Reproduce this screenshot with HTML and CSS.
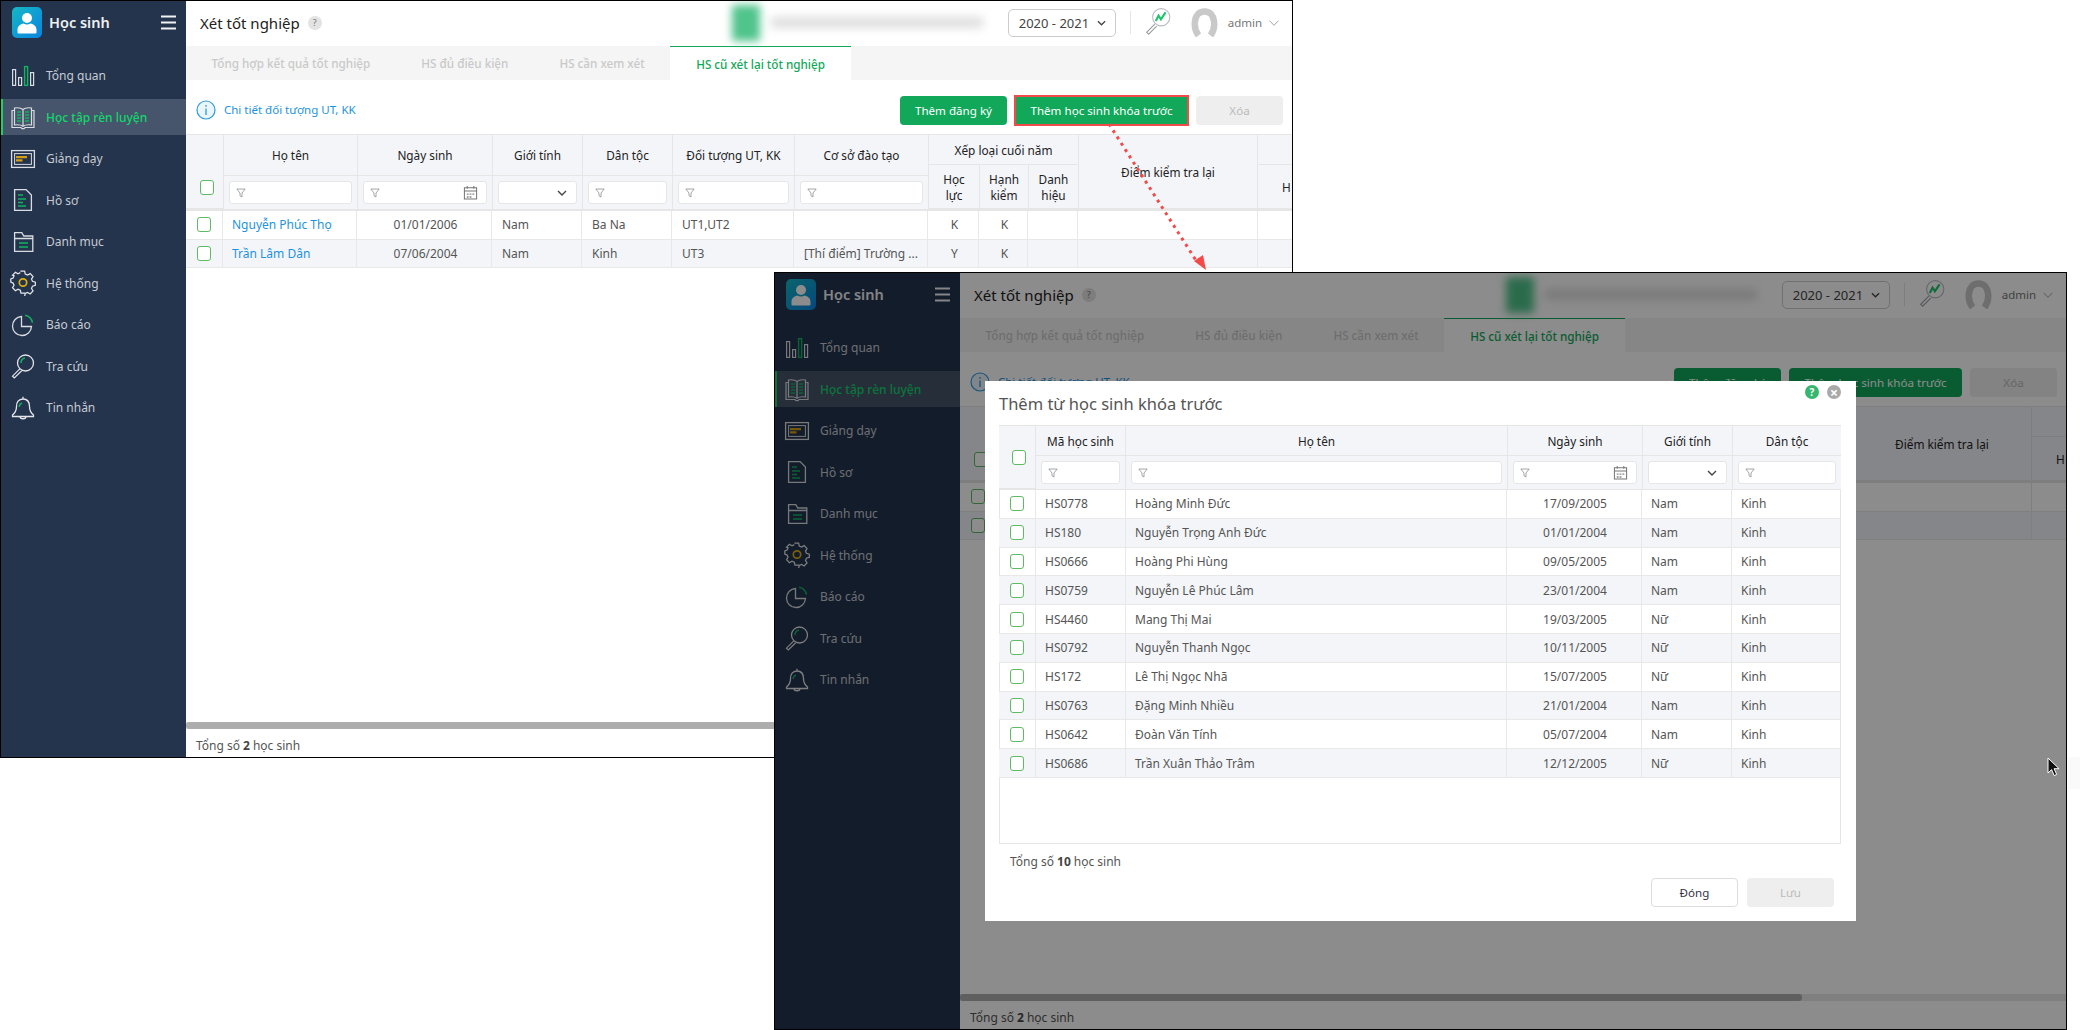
FILE: index.html
```html
<!DOCTYPE html>
<html lang="vi">
<head>
<meta charset="utf-8">
<title>Xét tốt nghiệp</title>
<link rel="stylesheet" href="styles.css">
</head>
<body>
<svg class="defs" width="0" height="0" aria-hidden="true">
  <symbol id="i-user" viewBox="0 0 30 30"><circle cx="15" cy="10.500" r="5" fill="#fff"/><path d="M5.500 25v-2.500c0-4 3-6 6-6.500 2 1.400 5 1.400 7 0 3 .5 6 2.500 6 6.500V25a1 1 0 0 1-1 1h-17a1 1 0 0 1-1-1z" fill="#fff"/></symbol>
  <symbol id="i-bars" viewBox="0 0 26 26"><g fill="none" stroke="#d9dce1" stroke-width="1.200"><rect x="2.600" y="6.600" width="3" height="15.800"/><rect x="8.600" y="14.600" width="3" height="7.800"/><rect x="20.600" y="9.600" width="3" height="12.800"/></g><rect x="14.600" y="3.600" width="3" height="18.800" fill="none" stroke="#12b262" stroke-width="1.400"/></symbol>
  <symbol id="i-book" viewBox="0 0 26 26"><g fill="none" stroke="#d9dce1" stroke-width="1.200"><path d="M13 5.500C11 3.800 7.500 3.500 4.500 4v17c3-.5 6.500-.2 8.500 1.300 2-1.500 5.500-1.800 8.500-1.300V4c-3-.5-6.500-.2-8.500 1.500zM13 5.500v16.800"/><path d="M4.500 6.500H2v17h9l1 1.200h2l1-1.200h9v-17h-2.500"/></g><g stroke="#12b262" stroke-width="1.600"><path d="M7 8h4M7 11h4M7 14h4M7 17h4M15 8h4M15 11h4M15 14h4M15 17h4"/></g></symbol>
  <symbol id="i-screen" viewBox="0 0 26 26"><rect x="1.600" y="4.600" width="22.800" height="16.800" fill="none" stroke="#d9dce1" stroke-width="1.300"/><rect x="4.600" y="7.600" width="16.800" height="10.800" fill="none" stroke="#d9dce1" stroke-width="1"/><path d="M6 10h11v2.200H6zM6 13.200h6.500v2.200H6z" fill="#d39e16"/></symbol>
  <symbol id="i-doc" viewBox="0 0 26 26"><path d="M4.600 2.600h11.500l5.300 5.500v15.300H4.600z" fill="none" stroke="#d9dce1" stroke-width="1.300"/><path d="M8 8h5M8 12h8M8 15.500h5M8 19h8" stroke="#12b262" stroke-width="1.700"/></symbol>
  <symbol id="i-folder" viewBox="0 0 26 26"><path d="M4.600 3.600h7.200l2 3.400h9v15.400H4.600zM4.600 9.500h18.200" fill="none" stroke="#d9dce1" stroke-width="1.300"/><path d="M9 14h9M9 18h9" stroke="#12b262" stroke-width="1.700"/></symbol>
  <symbol id="i-gear" viewBox="0 0 26 26"><path d="M10.800 2.500h4.400l.7 3 2.400 1.100 2.700-1.600 3 3.100-1.600 2.600 1 2.300 3 .9v3.400l-3 .9-1 2.300 1.600 2.600-3 3.100-2.700-1.600-2.400 1.100-.7 3" transform="translate(0 -1.200) scale(.96)" fill="none" stroke="#e3e5e9" stroke-width="1.300"/><path d="M15.200 24.300h-4.400l-.7-3-2.400-1.100-2.700 1.600-3-3.100 1.600-2.600-1-2.300-2.400-.9v-3.400l2.400-.9 1-2.300L2 5.600l3-3.100 2.700 1.600 2.400-1.100" transform="translate(.6 -.2) scale(.96)" fill="none" stroke="#e3e5e9" stroke-width="1.300"/><circle cx="13" cy="12.500" r="3.700" fill="none" stroke="#e0b010" stroke-width="1.700"/></symbol>
  <symbol id="i-pie" viewBox="0 0 26 26"><path d="M11.500 4.500a9.500 9.500 0 1 0 10 10h-10z" fill="none" stroke="#d9dce1" stroke-width="1.300"/><path d="M15 3.200a9.500 9.500 0 0 1 7.500 7.500" fill="none" stroke="#12b262" stroke-width="1.500"/></symbol>
  <symbol id="i-search" viewBox="0 0 26 26"><circle cx="15.500" cy="10" r="8" fill="none" stroke="#e3e5e9" stroke-width="1.300"/><path d="M9.800 15.800 2.500 23.200l1.800 1.800 7.400-7.300" fill="none" stroke="#e3e5e9" stroke-width="1.200"/><path d="M11 10a5 5 0 0 1 4-5" fill="none" stroke="#12b262" stroke-width="1.500"/></symbol>
  <symbol id="i-bell" viewBox="0 0 26 26"><path d="M13 4c-4.500 0-6.500 3.500-6.500 7.500 0 4-1.500 6.500-4 8.500v1.500h21V20c-2.500-2-4-4.500-4-8.500C19.500 7.500 17.500 4 13 4zM13 4V1.800M10 21.500c0 3 6 3 6 0" fill="none" stroke="#e3e5e9" stroke-width="1.300"/><path d="M9 12a5 5 0 0 1 3-4" fill="none" stroke="#12b262" stroke-width="1.500"/></symbol>
  <symbol id="i-trend" viewBox="0 0 26 26"><circle cx="16" cy="9.500" r="8" fill="none" stroke="#b9bcc2" stroke-width="1"/><path d="M10 16 2.500 23.500l1.800 1.800 7.500-7.500" fill="none" stroke="#9a9da3" stroke-width="1"/><path d="M11 13l2.500-5 2.200 3.500L20 5" fill="none" stroke="#1fc46c" stroke-width="2"/></symbol>
  <symbol id="i-filter" viewBox="0 0 10 10"><path d="M.8 1h8.400L6 5v4L4 7.800V5z" fill="none" stroke="#8b8f96" stroke-width=".8"/></symbol>
  <symbol id="i-cal" viewBox="0 0 16 16"><path d="M1.500 3h13v12h-13zM1.500 6.500h13M4.500 1v3M11.500 1v3" fill="none" stroke="#777" stroke-width="1.100"/><path d="M4 9h2v1.500H4zM7 9h2v1.500H7zM10 9h2v1.500h-2zM4 12h2v1.500H4zM7 12h2v1.500H7z" fill="#888"/></symbol>
  <symbol id="i-down" viewBox="0 0 10 6"><path d="M1 1l4 4 4-4" fill="none" stroke="#444" stroke-width="1.400"/></symbol>
  <symbol id="i-down-thin" viewBox="0 0 10 6"><path d="M.5 .7 5 5.300 9.500 .7" fill="none" stroke="#999" stroke-width=".9"/></symbol>
  <symbol id="i-avatar" viewBox="0 0 29 29"><path d="M8.500 27.500C2.800 20 3 3.500 14.500 3.500S26.200 20 20.500 27.500" fill="none" stroke="#c9c9c9" stroke-width="6.500"/></symbol>
  <symbol id="i-info" viewBox="0 0 20 22"><circle cx="10" cy="11" r="9" fill="#eaf5fc" stroke="#2a9be0" stroke-width="1.200"/><path d="M10 9.500v6.500M10 6v1.800" stroke="#2a9be0" stroke-width="1.300"/></symbol>
  <symbol id="i-burger" viewBox="0 0 15 15"><path d="M0 1.500h15M0 7.500h15M0 13.500h15" stroke="#f1f2f4" stroke-width="2"/></symbol>
</svg>

<section class="win win-a">
  <aside class="side">
    <div class="brand">
      <span class="logo"><svg class="logo-i"><use href="#i-user"/></svg></span>
      <span class="brand-name">Học sinh</span>
      <svg class="burger"><use href="#i-burger"/></svg>
    </div>
    <nav class="nav">
      <a class="nav-item"><svg class="nav-i"><use href="#i-bars"/></svg>Tổng quan</a>
      <a class="nav-item active"><svg class="nav-i"><use href="#i-book"/></svg>Học tập rèn luyện</a>
      <a class="nav-item"><svg class="nav-i"><use href="#i-screen"/></svg>Giảng dạy</a>
      <a class="nav-item"><svg class="nav-i"><use href="#i-doc"/></svg>Hồ sơ</a>
      <a class="nav-item"><svg class="nav-i"><use href="#i-folder"/></svg>Danh mục</a>
      <a class="nav-item"><svg class="nav-i"><use href="#i-gear"/></svg>Hệ thống</a>
      <a class="nav-item"><svg class="nav-i"><use href="#i-pie"/></svg>Báo cáo</a>
      <a class="nav-item"><svg class="nav-i"><use href="#i-search"/></svg>Tra cứu</a>
      <a class="nav-item"><svg class="nav-i"><use href="#i-bell"/></svg>Tin nhắn</a>
    </nav>
  </aside>
  <main class="main">
    <header class="top">
      <h1 class="page-title">Xét tốt nghiệp</h1><span class="q">?</span>
      <div class="school"><span class="school-logo"></span><span class="school-name"></span></div>
      <div class="year">2020 - 2021<svg class="year-i"><use href="#i-down"/></svg></div>
      <span class="sep"></span>
      <svg class="trend"><use href="#i-trend"/></svg>
      <svg class="avatar"><use href="#i-avatar"/></svg>
      <span class="admin">admin</span>
      <svg class="admin-i"><use href="#i-down-thin"/></svg>
    </header>
    <div class="tabs">
      <span class="tab">Tổng hợp kết quả tốt nghiệp</span>
      <span class="tab">HS đủ điều kiện</span>
      <span class="tab">HS cần xem xét</span>
      <span class="tab tab-on">HS cũ xét lại tốt nghiệp</span>
    </div>
    <div class="actions">
      <svg class="info-i"><use href="#i-info"/></svg>
      <a class="info-link">Chi tiết đối tượng UT, KK</a>
      <button class="btn btn-green b1">Thêm đăng ký</button>
      <button class="btn btn-green b2 marked">Thêm học sinh khóa trước</button>
      <button class="btn btn-off b3">Xóa</button>
    </div>
    <div class="hgrid">
      <div class="th th-check"><span class="cb"></span></div>
      <div class="th r2">Họ tên</div>
      <div class="th r2">Ngày sinh</div>
      <div class="th r2">Giới tính</div>
      <div class="th r2">Dân tộc</div>
      <div class="th r2">Đối tượng UT, KK</div>
      <div class="th r2">Cơ sở đào tạo</div>
      <div class="th group">Xếp loại cuối năm</div>
      <div class="th r3">Điểm kiểm tra lại</div>
      <div class="th"></div>
      <div class="th r2 sub">Học lực</div>
      <div class="th r2 sub">Hạnh kiểm</div>
      <div class="th r2 sub">Danh hiệu</div>
      <div class="th r2 last">H</div>
      <div class="th fc"><span class="fi"><svg class="f-i"><use href="#i-filter"/></svg></span></div>
      <div class="th fc"><span class="fi"><svg class="f-i"><use href="#i-filter"/></svg><svg class="cal-i"><use href="#i-cal"/></svg></span></div>
      <div class="th fc"><span class="fi fi-end"><svg class="sel-i"><use href="#i-down"/></svg></span></div>
      <div class="th fc"><span class="fi"><svg class="f-i"><use href="#i-filter"/></svg></span></div>
      <div class="th fc"><span class="fi"><svg class="f-i"><use href="#i-filter"/></svg></span></div>
      <div class="th fc"><span class="fi"><svg class="f-i"><use href="#i-filter"/></svg></span></div>
    </div>
    <div class="brow">
      <div class="td ctr"><span class="cb"></span></div><div class="td link">Nguyễn Phúc Thọ</div><div class="td ctr">01/01/2006</div><div class="td">Nam</div><div class="td">Ba Na</div><div class="td">UT1,UT2</div><div class="td"></div><div class="td ctr">K</div><div class="td ctr">K</div><div class="td"></div><div class="td"></div><div class="td"></div>
    </div>
    <div class="brow alt">
      <div class="td ctr"><span class="cb"></span></div><div class="td link">Trần Lâm Dân</div><div class="td ctr">07/06/2004</div><div class="td">Nam</div><div class="td">Kinh</div><div class="td">UT3</div><div class="td">[Thí điểm] Trường ...</div><div class="td ctr">Y</div><div class="td ctr">K</div><div class="td"></div><div class="td"></div><div class="td"></div>
    </div>
    <div class="grow"></div>
    <div class="hscroll"><span class="thumb"></span></div>
    <div class="total">Tổng số <b>2</b> học sinh</div>
  </main>
</section>

<svg class="arrow" width="120" height="170" viewBox="0 0 120 170" aria-hidden="true">
  <path d="M4 2 92 140" fill="none" stroke="#f34a4a" stroke-width="3" stroke-dasharray="3 4.500"/>
  <path d="M89 139l9-6 3 15z" fill="#f34a4a"/>
</svg>

<section class="win win-b">
  <aside class="side">
    <div class="brand">
      <span class="logo"><svg class="logo-i"><use href="#i-user"/></svg></span>
      <span class="brand-name">Học sinh</span>
      <svg class="burger"><use href="#i-burger"/></svg>
    </div>
    <nav class="nav">
      <a class="nav-item"><svg class="nav-i"><use href="#i-bars"/></svg>Tổng quan</a>
      <a class="nav-item active"><svg class="nav-i"><use href="#i-book"/></svg>Học tập rèn luyện</a>
      <a class="nav-item"><svg class="nav-i"><use href="#i-screen"/></svg>Giảng dạy</a>
      <a class="nav-item"><svg class="nav-i"><use href="#i-doc"/></svg>Hồ sơ</a>
      <a class="nav-item"><svg class="nav-i"><use href="#i-folder"/></svg>Danh mục</a>
      <a class="nav-item"><svg class="nav-i"><use href="#i-gear"/></svg>Hệ thống</a>
      <a class="nav-item"><svg class="nav-i"><use href="#i-pie"/></svg>Báo cáo</a>
      <a class="nav-item"><svg class="nav-i"><use href="#i-search"/></svg>Tra cứu</a>
      <a class="nav-item"><svg class="nav-i"><use href="#i-bell"/></svg>Tin nhắn</a>
    </nav>
  </aside>
  <main class="main">
    <header class="top">
      <h1 class="page-title">Xét tốt nghiệp</h1><span class="q">?</span>
      <div class="school"><span class="school-logo"></span><span class="school-name"></span></div>
      <div class="year">2020 - 2021<svg class="year-i"><use href="#i-down"/></svg></div>
      <span class="sep"></span>
      <svg class="trend"><use href="#i-trend"/></svg>
      <svg class="avatar"><use href="#i-avatar"/></svg>
      <span class="admin">admin</span>
      <svg class="admin-i"><use href="#i-down-thin"/></svg>
    </header>
    <div class="tabs">
      <span class="tab">Tổng hợp kết quả tốt nghiệp</span>
      <span class="tab">HS đủ điều kiện</span>
      <span class="tab">HS cần xem xét</span>
      <span class="tab tab-on">HS cũ xét lại tốt nghiệp</span>
    </div>
    <div class="actions">
      <svg class="info-i"><use href="#i-info"/></svg>
      <a class="info-link">Chi tiết đối tượng UT, KK</a>
      <button class="btn btn-green b1">Thêm đăng ký</button>
      <button class="btn btn-green b2">Thêm học sinh khóa trước</button>
      <button class="btn btn-off b3">Xóa</button>
    </div>
    <div class="hgrid">
      <div class="th th-check"><span class="cb"></span></div>
      <div class="th r2">Họ tên</div>
      <div class="th r2">Ngày sinh</div>
      <div class="th r2">Giới tính</div>
      <div class="th r2">Dân tộc</div>
      <div class="th r2">Đối tượng UT, KK</div>
      <div class="th r2">Cơ sở đào tạo</div>
      <div class="th group">Xếp loại cuối năm</div>
      <div class="th r3">Điểm kiểm tra lại</div>
      <div class="th"></div>
      <div class="th r2 sub">Học lực</div>
      <div class="th r2 sub">Hạnh kiểm</div>
      <div class="th r2 sub">Danh hiệu</div>
      <div class="th r2 last">H</div>
      <div class="th fc"><span class="fi"><svg class="f-i"><use href="#i-filter"/></svg></span></div>
      <div class="th fc"><span class="fi"><svg class="f-i"><use href="#i-filter"/></svg><svg class="cal-i"><use href="#i-cal"/></svg></span></div>
      <div class="th fc"><span class="fi fi-end"><svg class="sel-i"><use href="#i-down"/></svg></span></div>
      <div class="th fc"><span class="fi"><svg class="f-i"><use href="#i-filter"/></svg></span></div>
      <div class="th fc"><span class="fi"><svg class="f-i"><use href="#i-filter"/></svg></span></div>
      <div class="th fc"><span class="fi"><svg class="f-i"><use href="#i-filter"/></svg></span></div>
    </div>
    <div class="brow">
      <div class="td ctr"><span class="cb"></span></div><div class="td link">Nguyễn Phúc Thọ</div><div class="td ctr">01/01/2006</div><div class="td">Nam</div><div class="td">Ba Na</div><div class="td">UT1,UT2</div><div class="td"></div><div class="td ctr">K</div><div class="td ctr">K</div><div class="td"></div><div class="td"></div><div class="td"></div>
    </div>
    <div class="brow alt">
      <div class="td ctr"><span class="cb"></span></div><div class="td link">Trần Lâm Dân</div><div class="td ctr">07/06/2004</div><div class="td">Nam</div><div class="td">Kinh</div><div class="td">UT3</div><div class="td">[Thí điểm] Trường ...</div><div class="td ctr">Y</div><div class="td ctr">K</div><div class="td"></div><div class="td"></div><div class="td"></div>
    </div>
    <div class="grow"></div>
    <div class="hscroll"><span class="thumb"></span></div>
    <div class="total">Tổng số <b>2</b> học sinh</div>
  </main>
  <div class="overlay"></div>
  <div class="modal">
    <span class="m-help">?</span>
    <span class="m-close">×</span>
    <h2 class="m-title">Thêm từ học sinh khóa trước</h2>
    <div class="m-table">
      <div class="m-head">
        <div class="th th-mcheck"><span class="cb"></span></div>
        <div class="th">Mã học sinh</div>
        <div class="th">Họ tên</div>
        <div class="th">Ngày sinh</div>
        <div class="th">Giới tính</div>
        <div class="th m-end">Dân tộc</div>
        <div class="th fc"><span class="fi"><svg class="f-i"><use href="#i-filter"/></svg></span></div>
        <div class="th fc"><span class="fi"><svg class="f-i"><use href="#i-filter"/></svg></span></div>
        <div class="th fc"><span class="fi"><svg class="f-i"><use href="#i-filter"/></svg><svg class="cal-i"><use href="#i-cal"/></svg></span></div>
        <div class="th fc"><span class="fi fi-end"><svg class="sel-i"><use href="#i-down"/></svg></span></div>
        <div class="th fc m-end"><span class="fi"><svg class="f-i"><use href="#i-filter"/></svg></span></div>
      </div>
      <div class="m-row"><div class="td ctr"><span class="cb"></span></div><div class="td">HS0778</div><div class="td">Hoàng Minh Đức</div><div class="td ctr">17/09/2005</div><div class="td">Nam</div><div class="td m-end">Kinh</div></div>
      <div class="m-row alt"><div class="td ctr"><span class="cb"></span></div><div class="td">HS180</div><div class="td">Nguyễn Trọng Anh Đức</div><div class="td ctr">01/01/2004</div><div class="td">Nam</div><div class="td m-end">Kinh</div></div>
      <div class="m-row"><div class="td ctr"><span class="cb"></span></div><div class="td">HS0666</div><div class="td">Hoàng Phi Hùng</div><div class="td ctr">09/05/2005</div><div class="td">Nam</div><div class="td m-end">Kinh</div></div>
      <div class="m-row alt"><div class="td ctr"><span class="cb"></span></div><div class="td">HS0759</div><div class="td">Nguyễn Lê Phúc Lâm</div><div class="td ctr">23/01/2004</div><div class="td">Nam</div><div class="td m-end">Kinh</div></div>
      <div class="m-row"><div class="td ctr"><span class="cb"></span></div><div class="td">HS4460</div><div class="td">Mang Thị Mai</div><div class="td ctr">19/03/2005</div><div class="td">Nữ</div><div class="td m-end">Kinh</div></div>
      <div class="m-row alt"><div class="td ctr"><span class="cb"></span></div><div class="td">HS0792</div><div class="td">Nguyễn Thanh Ngọc</div><div class="td ctr">10/11/2005</div><div class="td">Nữ</div><div class="td m-end">Kinh</div></div>
      <div class="m-row"><div class="td ctr"><span class="cb"></span></div><div class="td">HS172</div><div class="td">Lê Thị Ngọc Nhã</div><div class="td ctr">15/07/2005</div><div class="td">Nữ</div><div class="td m-end">Kinh</div></div>
      <div class="m-row alt"><div class="td ctr"><span class="cb"></span></div><div class="td">HS0763</div><div class="td">Đặng Minh Nhiều</div><div class="td ctr">21/01/2004</div><div class="td">Nam</div><div class="td m-end">Kinh</div></div>
      <div class="m-row"><div class="td ctr"><span class="cb"></span></div><div class="td">HS0642</div><div class="td">Đoàn Văn Tính</div><div class="td ctr">05/07/2004</div><div class="td">Nam</div><div class="td m-end">Kinh</div></div>
      <div class="m-row alt"><div class="td ctr"><span class="cb"></span></div><div class="td">HS0686</div><div class="td">Trần Xuân Thảo Trâm</div><div class="td ctr">12/12/2005</div><div class="td">Nữ</div><div class="td m-end">Kinh</div></div>
    </div>
    <div class="m-total">Tổng số <b>10</b> học sinh</div>
    <div class="m-foot">
      <button class="btn btn-line">Đóng</button>
      <button class="btn btn-off">Lưu</button>
    </div>
  </div>
</section>

<svg class="cursor" width="14" height="20" viewBox="0 0 14 20" aria-hidden="true"><path d="M1 1v15l3.600-3.400 2.600 6 2.500-1.100-2.600-5.800h5z" fill="#111" stroke="#fff" stroke-width="1"/></svg>
<span class="stray"></span>
</body>
</html>
```
FILE: styles.css
```css
* { box-sizing: border-box; }
html, body { margin: 0; height: 100%; }
body {
  position: relative;
  overflow: hidden;
  background: #fff;
  font-family: "Noto Sans", "Open Sans", sans-serif;
  font-size: 12px;
  color: #555;
}
.defs { position: absolute; }

/* windows on the canvas */
.win {
  position: absolute;
  display: flex;
  width: 1293px;
  height: 758px;
  border: 1px solid #000;
  background: #fff;
  overflow: hidden;
}
.win-a { left: 0; top: 0; }
.win-b { left: 774px; top: 272px; }

/* sidebar */
.side { flex: 0 0 185px; background: #24344d; }
.brand { display: flex; align-items: center; height: 42px; padding: 0 10px 0 11px; }
.logo {
  display: flex;
  width: 30px;
  height: 31px;
  border-radius: 5px;
  background: linear-gradient(135deg, #14b8c4, #0a83e2);
}
.logo-i { width: 30px; height: 31px; }
.brand-name { margin-left: 7px; font-size: 14.500px; font-weight: 600; color: #eef0f3; }
.burger { width: 15px; height: 15px; margin-left: auto; }
.nav { display: flex; flex-direction: column; gap: 5.500px; padding-top: 14.500px; }
.nav-item {
  display: flex;
  align-items: center;
  height: 36px;
  padding-left: 9px;
  font-size: 12px;
  color: #c6cbd3;
}
.nav-i { width: 26px; height: 26px; margin-right: 10px; flex: none; }
.nav-item.active {
  background: #46556b;
  border-left: 2px solid #13d66b;
  padding-left: 7px;
  color: #13d66b;
  font-weight: 500;
}

/* main */
.main { flex: 1; min-width: 0; display: flex; flex-direction: column; overflow: hidden; }
.top { display: flex; align-items: center; flex: 0 0 45px; padding: 0 0 2px 14px; }
.page-title { margin: 0; font-size: 15px; font-weight: 400; color: #222; }
.q {
  display: flex; align-items: center; justify-content: center;
  width: 14px; height: 14px; margin-left: 8px;
  border-radius: 50%;
  background: #e3e3e3;
  font-size: 9px; color: #777;
}
.school { display: flex; align-items: center; margin-left: 410px; width: 276px; }
.school-logo { width: 28px; height: 36px; background: #4fc48b; filter: blur(4px); }
.school-name { width: 212px; height: 11px; margin-left: 11px; background: #dedede; filter: blur(5px); }
.year {
  display: flex; align-items: center; justify-content: space-between;
  width: 108px; height: 28px; padding: 0 9px 0 10px;
  border: 1px solid #ccc; border-radius: 5px;
  font-size: 13px; color: #444;
}
.year-i { width: 9px; height: 6px; }
.sep { width: 1px; height: 23px; margin-left: 14px; background: #e5e5e5; }
.trend { width: 28px; height: 28px; margin: 0 0 4px 13px; }
.avatar { width: 29px; height: 29px; margin-left: 18px; }
.admin { margin-left: 9px; font-size: 11.500px; color: #777; }
.admin-i { width: 10px; height: 6px; margin-left: 7px; }

.tabs { display: flex; flex: 0 0 34px; background: #f5f5f5; }
.tab { display: flex; align-items: center; padding: 0 25.500px; font-size: 11.700px; font-weight: 500; color: #c9c9c9; }
.tab-on {
  padding: 0 26px;
  background: #fff;
  border-top: 1.500px solid #12a85a;
  color: #12a85a;
}

.actions { display: flex; align-items: flex-start; flex: 0 0 54px; padding: 16px 9px 0 10px; }
.info-i { width: 20px; height: 22px; margin-top: 3px; }
.info-link { margin: 6px auto 0 8px; font-size: 11.500px; color: #1c93e0; }
.btn {
  height: 29px;
  border: 0;
  border-radius: 4px;
  font: inherit;
  font-size: 11.600px;
}
.btn-green { background: #12a85a; color: #fff; }
.btn-off { background: #eee; color: #bbb; }
.btn-line { background: #fff; border: 1px solid #ddd; color: #334; }
.b1 { width: 107px; }
.b2 { width: 173px; margin-left: 8px; }
.b3 { width: 87px; margin-left: 8px; }
.marked { border-radius: 0; outline: 2px solid #f34a4a; outline-offset: -1px; }

/* main table */
.hgrid {
  display: grid;
  grid-template-columns: 38px 134px 135px 90px 90px 122px 134px 51px 49px 50px 179px 104px;
  grid-template-rows: 30px 11px 33px 2px;
  width: max-content;
  border-top: 1px solid #e6e6e6;
}
.th {
  display: flex; align-items: center; justify-content: center;
  background: #f3f5f9;
  border-right: 1px solid #e6e6e6;
  border-bottom: 1px solid #e6e6e6;
  font-size: 11.800px;
  color: #222;
  text-align: center;
  line-height: 16px;
}
.r2 { grid-row: span 2; }
.r3 { grid-row: span 3; }
.th-check { grid-row: span 3; align-items: flex-end; padding: 0 0 13px 4px; }
.group { grid-column: span 3; }
.sub { padding: 0 8px; }
.last { justify-content: flex-start; padding-left: 24px; white-space: nowrap; }
.fc { padding: 5px; grid-row: span 1; border-bottom: 0; }
.hgrid::after {
  content: "";
  grid-row: 4;
  grid-column: 1 / -1;
  background: #e6e6e6;
}
.fi {
  display: flex; align-items: center; justify-content: space-between;
  width: 100%; height: 23px;
  padding: 0 6px;
  background: #fff;
  border: 1px solid #e6e6e6;
  border-radius: 3px;
}
.fi-end { justify-content: flex-end; }
.f-i { width: 10px; height: 10px; }
.cal-i { width: 15px; height: 15px; margin-right: 2px; }
.sel-i { width: 10px; height: 6px; margin-right: 3px; }

.cb {
  display: block;
  width: 14px; height: 15px;
  border: 1.500px solid #5dbb63;
  border-radius: 3px;
  background: #fff;
}
.brow {
  display: grid;
  grid-template-columns: 37px 134px 135px 90px 90px 122px 134px 51px 49px 50px 180px 104px;
  height: 28.500px;
  width: max-content;
}
.td {
  display: flex; align-items: center;
  padding: 0 9px;
  border-right: 1px solid #e8e8e8;
  border-bottom: 1px solid #e8e8e8;
  white-space: nowrap;
  overflow: hidden;
}
.brow .td { padding-left: 10px; }
.brow .link { padding-left: 9px; }
.brow .ctr { padding-left: 0; }
.brow .td + .ctr { padding-left: 3px; }
.ctr { justify-content: center; padding: 0; }
.m-row .td + .ctr { padding-left: 2px; }
.link { color: #1c93e0; }
.alt { background: #f3f5f9; }
.grow { flex: 1; }
.hscroll { flex: 0 0 7px; margin-bottom: 1px; background: #e7e7e7; }
.thumb { display: block; width: 842px; height: 7px; border-radius: 3px; background: #adadad; }
.total { display: flex; align-items: center; flex: 0 0 27px; gap: 3px; padding: 4px 0 0 10px; }
.total b, .m-total b { color: #444; }

/* connector, cursor */
.arrow { position: absolute; left: 1105px; top: 122px; }
.cursor { position: absolute; left: 2047px; top: 757px; }
.stray { position: absolute; left: 2068px; top: 757px; width: 12px; height: 32px; background: #fafafa; }

/* modal */
.overlay { position: absolute; inset: 0; background: rgba(0, 0, 0, .45); }
.modal {
  position: absolute;
  left: 210px; top: 108px;
  display: flex; flex-direction: column;
  width: 871px; height: 540px;
  padding: 0 15px 0 14px;
  background: #fff;
}
.m-title { display: flex; align-items: center; height: 44px; margin: 0; font-size: 16.500px; font-weight: 400; color: #555; }
.m-help, .m-close {
  position: absolute; top: 4px;
  display: flex; align-items: center; justify-content: center;
  width: 14px; height: 14px;
  border-radius: 50%;
  font-size: 10px; font-weight: 700; color: #fff;
}
.m-help { right: 37px; background: #35b76f; }
.m-close { right: 15px; background: #a9a9a9; font-size: 14px; }
.m-table { height: 419px; border: 1px solid #e6e6e6; border-top: 0; }
.m-head {
  display: grid;
  grid-template-columns: 37px 90px 382px 135px 90px 108px;
  grid-template-rows: 30px 33px;
  border-top: 1px solid #e6e6e6;
  border-bottom: 2px solid #e6e6e6;
  margin-left: -1px;
  height: 65px;
  width: calc(100% + 2px);
}
.th-mcheck { grid-row: span 2; padding-left: 3px; }
.m-row {
  display: grid;
  grid-template-columns: 37px 90px 381px 135px 90px 108px;
  height: 28.800px;
  margin-left: -1px;
}
.m-end { border-right: 0; }
.m-total { display: flex; align-items: center; gap: 3px; height: 34px; padding-left: 11px; }
.m-foot { display: flex; justify-content: flex-end; gap: 9px; padding-right: 7px; }
.m-foot .btn { width: 87px; }
```
